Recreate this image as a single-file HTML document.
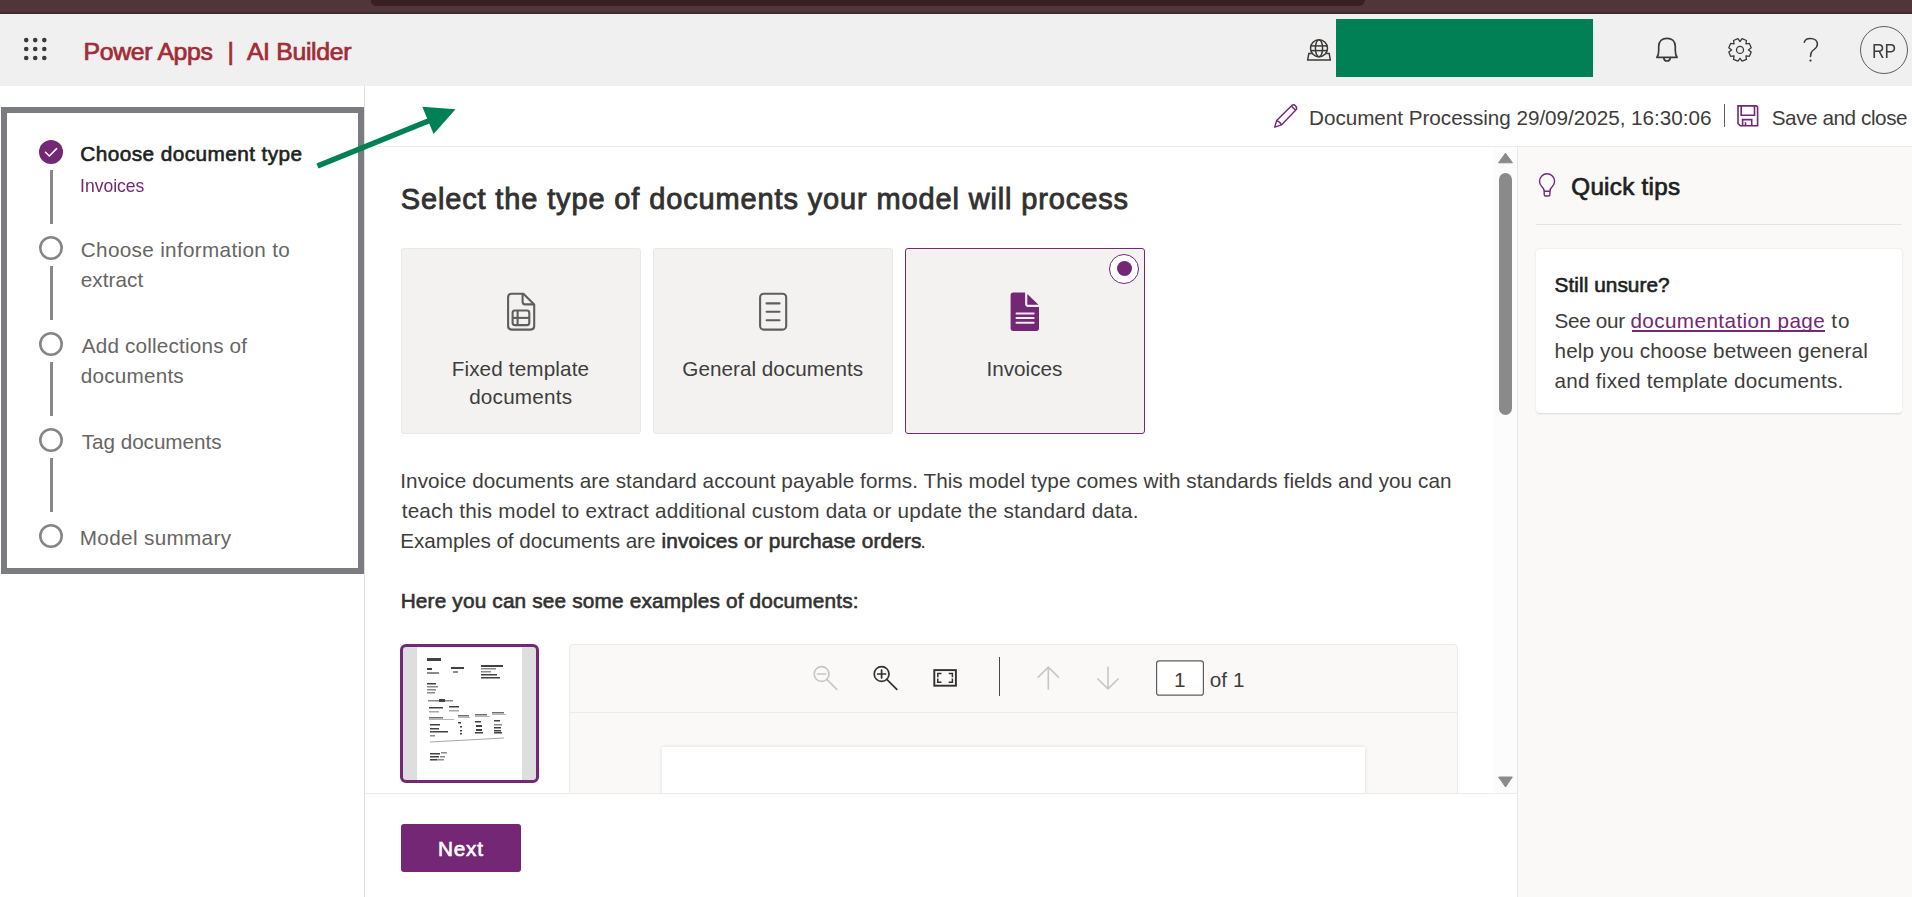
<!DOCTYPE html>
<html><head><meta charset="utf-8">
<style>
*{box-sizing:border-box;margin:0;padding:0}
html,body{width:1912px;height:897px;overflow:hidden;background:#fff;font-family:"Liberation Sans",sans-serif;color:#323130}
.a{position:absolute}
.t{position:absolute;white-space:nowrap;line-height:1}
.t a{color:#742774;text-decoration:underline;text-underline-offset:3px;text-decoration-thickness:1.5px}
svg{position:absolute;overflow:visible}
</style></head><body>
<!-- top browser bar -->
<div class="a" style="left:0;top:0;width:1912px;height:13px;background:#523539"></div>
<div class="a" style="left:0;top:12px;width:1912px;height:2px;background:#3c2c2f"></div>
<div class="a" style="left:371px;top:0;width:994px;height:6px;background:#381f23;border-radius:0 0 8px 7px"></div>
<!-- header -->
<div class="a" style="left:0;top:14px;width:1912px;height:72px;background:#f0f0f0"></div>
<svg style="left:0;top:0" width="60" height="70">
 <g fill="#3b3a39">
  <circle cx="26.2" cy="40.1" r="2.3"/><circle cx="35.2" cy="40.1" r="2.3"/><circle cx="44.3" cy="40.1" r="2.3"/>
  <circle cx="26.2" cy="49" r="2.3"/><circle cx="35.2" cy="49" r="2.3"/><circle cx="44.3" cy="49" r="2.3"/>
  <circle cx="26.2" cy="58" r="2.3"/><circle cx="35.2" cy="58" r="2.3"/><circle cx="44.3" cy="58" r="2.3"/>
 </g>
</svg>
<!-- globe -->
<svg style="left:1300px;top:30px" width="40" height="40" viewBox="1300 30 40 40">
 <g fill="none" stroke="#3b3a39" stroke-width="1.5">
  <circle cx="1319" cy="48.3" r="8.5"/>
  <ellipse cx="1319" cy="48.3" rx="3.6" ry="8.5"/>
  <line x1="1310.6" y1="45.9" x2="1327.4" y2="45.9"/>
  <line x1="1310.6" y1="50.6" x2="1327.4" y2="50.6"/>
  <path d="M1311.8 53.4 H1308.8 L1307.7 59.9 H1330.3 L1329.2 53.4 H1326.2"/>
 </g>
</svg>
<div class="a" style="left:1336px;top:19px;width:257px;height:58px;background:#018055"></div>
<!-- bell -->
<svg style="left:1650px;top:30px" width="40" height="40" viewBox="1650 30 40 40">
 <g fill="none" stroke="#3b3a39" stroke-width="1.7" stroke-linejoin="round">
  <path d="M1656.9 57.4 C1658.6 55.3 1658.7 53.6 1658.7 50.5 V46.6 C1658.7 41.3 1662.3 38.3 1667 38.3 C1671.7 38.3 1675.3 41.3 1675.3 46.6 V50.5 C1675.3 53.6 1675.4 55.3 1677.1 57.4 Z"/>
  <path d="M1663.8 57.7 C1663.8 59.9 1665.2 61 1667 61 C1668.8 61 1670.2 59.9 1670.2 57.7"/>
 </g>
</svg>
<!-- gear -->
<svg style="left:1720px;top:30px" width="40" height="40" viewBox="1720 30 40 40">
 <g fill="none" stroke="#3b3a39" stroke-width="1.3" stroke-linejoin="round">
  <path d="M1742.07 38.69 L1746.46 40.51 L1745.94 43.96 L1749.39 43.44 L1751.21 47.83 L1748.40 49.90 L1751.21 51.97 L1749.39 56.36 L1745.94 55.84 L1746.46 59.29 L1742.07 61.11 L1740.00 58.30 L1737.93 61.11 L1733.54 59.29 L1734.06 55.84 L1730.61 56.36 L1728.79 51.97 L1731.60 49.90 L1728.79 47.83 L1730.61 43.44 L1734.06 43.96 L1733.54 40.51 L1737.93 38.69 L1740.00 41.50 Z"/>
  <circle cx="1740" cy="49.9" r="3.5"/>
 </g>
</svg>
<!-- question -->
<svg style="left:1795px;top:30px" width="30" height="40" viewBox="1795 30 30 40">
 <g fill="none" stroke="#3b3a39" stroke-width="1.5" stroke-linecap="round">
  <path d="M1804.3 42.2 C1805 39.5 1807.3 38.4 1810.3 38.4 C1814.8 38.4 1817.4 41.1 1817.4 44.2 C1817.4 47.6 1814.5 49 1812.5 50.8 C1811 52.2 1810.5 53.5 1810.5 56.5"/>
 </g>
 <circle cx="1810.5" cy="60.6" r="1.1" fill="#3b3a39"/>
</svg>
<div class="a" style="left:1860px;top:26px;width:48px;height:48px;border:1px solid #605e5c;border-radius:50%"></div>

<!-- left panel -->
<div class="a" style="left:364px;top:86px;width:1px;height:811px;background:#e1dfdd"></div>
<svg style="left:0;top:0" width="364" height="600" viewBox="0 0 364 600">
 <circle cx="51" cy="152" r="12" fill="#742774"/>
 <path d="M45.5 152.3 L49.3 156 L56.6 148.6" fill="none" stroke="#fff" stroke-width="1.6" stroke-linecap="round" stroke-linejoin="round"/>
 <g stroke="#8a8886" stroke-width="3" fill="none">
  <line x1="51.5" y1="170" x2="51.5" y2="224"/>
  <line x1="51.5" y1="266" x2="51.5" y2="320"/>
  <line x1="51.5" y1="362" x2="51.5" y2="416"/>
  <line x1="51.5" y1="458" x2="51.5" y2="512"/>
 </g>
 <g stroke="#858585" stroke-width="2.6" fill="none">
  <circle cx="51" cy="248" r="10.7"/>
  <circle cx="51" cy="344" r="10.7"/>
  <circle cx="51" cy="440" r="10.7"/>
  <circle cx="51" cy="536" r="10.7"/>
 </g>
</svg>

<!-- toolbar -->
<div class="a" style="left:365px;top:146px;width:1547px;height:1px;background:#edebe9"></div>
<svg style="left:1270px;top:100px" width="34" height="32" viewBox="1270 100 34 32">
 <g fill="none" stroke="#742774" stroke-width="1.4" stroke-linejoin="round">
  <path d="M1276.6 120.6 L1291.3 105.9 A3.04 3.04 0 0 1 1295.6 110.2 L1281.4 124.9 L1274.7 127.2 Z"/>
  <line x1="1291.3" y1="105.9" x2="1295.6" y2="110.2"/>
  <path d="M1276.6 120.6 Q1280.2 121.6 1281.4 124.9"/>
 </g>
</svg>
<div class="a" style="left:1724px;top:104px;width:1px;height:23px;background:#605e5c"></div>
<svg style="left:1734px;top:102px" width="28" height="28" viewBox="1734 102 28 28">
 <g fill="none" stroke="#742774" stroke-width="1.6">
  <path d="M1738 105.9 H1755.8 Q1757.6 105.9 1757.6 107.7 V125.7 H1740.3 L1738 123.4 Z"/>
  <path d="M1741.2 105.9 V115.2 H1754.5 V105.9"/>
  <path d="M1742.6 125.7 V119.6 H1751.7 V125.7"/>
  <path d="M1745.5 122.2 V125.7"/>
 </g>
</svg>

<!-- cards -->
<div class="a" style="left:401px;top:248px;width:240px;height:186px;background:#f3f2f1;border:1px solid #ebe9e7;border-radius:3px"></div>
<div class="a" style="left:653px;top:248px;width:240px;height:186px;background:#f3f2f1;border:1px solid #ebe9e7;border-radius:3px"></div>
<div class="a" style="left:905px;top:248px;width:240px;height:186px;background:#f3f2f1;border:1px solid #742774;border-radius:3px"></div>
<svg style="left:500px;top:285px" width="45" height="55" viewBox="500 285 45 55">
 <g fill="none" stroke="#605e5c" stroke-width="2.1" stroke-linejoin="round">
  <path d="M523.4 293.8 H511.6 C509.6 293.8 508.1 295.3 508.1 297.3 V326.1 C508.1 328.1 509.6 329.6 511.6 329.6 H530.7 C532.7 329.6 534.2 328.1 534.2 326.1 V304.6 Z"/>
  <path d="M522.6 294 V301.8 C522.6 303.3 523.6 304.4 525.1 304.4 H534"/>
  <rect x="512.6" y="310.5" width="16.7" height="14.6" rx="2.4"/>
  <line x1="517.6" y1="310.5" x2="517.6" y2="325.1"/>
  <line x1="512.6" y1="317.9" x2="529.3" y2="317.9"/>
 </g>
</svg>
<svg style="left:752px;top:285px" width="45" height="55" viewBox="752 285 45 55">
 <g fill="none" stroke="#605e5c" stroke-width="2.1" stroke-linecap="round" stroke-linejoin="round">
  <rect x="760.1" y="293.8" width="26.1" height="35.8" rx="3.6"/>
  <line x1="766.6" y1="303.4" x2="779.5" y2="303.4"/>
  <line x1="766.6" y1="311.8" x2="779.5" y2="311.8"/>
  <line x1="766.6" y1="320.3" x2="779.5" y2="320.3"/>
 </g>
</svg>
<svg style="left:1005px;top:285px" width="45" height="55" viewBox="1005 285 45 55">
 <path d="M1025.1 292.6 H1013.1 C1011.7 292.6 1010.6 293.7 1010.6 295.1 V328.4 C1010.6 329.8 1011.7 330.9 1013.1 330.9 H1036.5 C1037.9 330.9 1039 329.8 1039 328.4 V306.9 H1028.1 C1026.4 306.9 1025.1 305.6 1025.1 303.9 Z" fill="#742774"/>
 <path d="M1027.3 294 L1038.5 304.7 H1027.3 Z" fill="#742774"/>
 <g stroke="#f3f2f1" stroke-width="2" stroke-linecap="round">
  <line x1="1016.5" y1="313.4" x2="1033.7" y2="313.4"/>
  <line x1="1016.5" y1="318" x2="1033.7" y2="318"/>
  <line x1="1016.5" y1="322.7" x2="1033.7" y2="322.7"/>
 </g>
</svg>
<div class="a" style="left:1109px;top:254px;width:30px;height:30px;background:#fff;border:1px solid #742774;border-radius:50%"></div>
<div class="a" style="left:1116.8px;top:260.9px;width:15px;height:15px;background:#742774;border-radius:50%"></div>

<!-- thumbnail -->
<div class="a" style="left:400px;top:644px;width:139px;height:139px;border:3px solid #742774;border-radius:6px;background:#dedede;overflow:hidden">
 <div class="a" style="left:14px;top:0;width:105px;height:133px;background:#fff"></div>
 <svg style="left:14px;top:0;filter:blur(0.45px);opacity:0.85" width="105" height="133" viewBox="0 0 105 133">
  <g fill="#222">
   <rect x="10" y="11" width="14" height="3"/>
   <rect x="10" y="21" width="5" height="2"/><rect x="10" y="25" width="12" height="2" fill="#777"/>
   <rect x="34" y="20" width="13" height="2"/><rect x="36" y="24" width="5" height="2" fill="#777"/>
   <rect x="64" y="18" width="22" height="2"/><rect x="64" y="21" width="15" height="1.5" fill="#777"/><rect x="64" y="24" width="10" height="1.5" fill="#777"/><rect x="64" y="27" width="16" height="1.5"/><rect x="64" y="30" width="19" height="1.5"/>
   <rect x="10" y="36" width="9" height="1.5"/><rect x="10" y="39" width="11" height="1.5" fill="#777"/><rect x="10" y="42" width="9" height="1.5" fill="#777"/><rect x="10" y="45" width="8" height="1.5" fill="#777"/>
   <rect x="11" y="53" width="14" height="1.5" fill="#777"/><rect x="22" y="52" width="6" height="3"/><rect x="28" y="53" width="8" height="1.5" fill="#777"/>
   <rect x="12" y="60" width="14" height="1.5"/><rect x="32" y="59" width="10" height="1.5"/>
   <rect x="12" y="64" width="10" height="1.5" fill="#999"/><rect x="32" y="63" width="10" height="1.5" fill="#999"/>
   <rect x="12" y="70" width="14" height="1.5" fill="#555"/><rect x="41" y="68" width="11" height="1.5" fill="#555"/><rect x="58" y="67" width="12" height="1.5" fill="#555"/><rect x="75" y="65" width="12" height="1.5" fill="#555"/>
   <rect x="12" y="72" width="25" height="1" fill="#aaa"/><rect x="41" y="70" width="12" height="1" fill="#aaa"/><rect x="58" y="69" width="15" height="1" fill="#aaa"/><rect x="75" y="67" width="14" height="1" fill="#aaa"/>
   <rect x="77" y="73" width="6" height="1.5"/>
   <rect x="13" y="77" width="10" height="1.5"/><rect x="41" y="75" width="3" height="1.5"/><rect x="58" y="74" width="6" height="1.5"/><rect x="77" y="77" width="8" height="1.5" fill="#777"/>
   <rect x="13" y="81" width="9" height="1.5"/><rect x="43" y="79" width="2" height="1.5"/><rect x="59" y="78" width="6" height="2"/><rect x="77" y="80" width="7" height="1.5"/>
   <rect x="13" y="84" width="18" height="1.5"/><rect x="43" y="83" width="2" height="1.5"/><rect x="59" y="82" width="6" height="2"/><rect x="77" y="83" width="7" height="1.5"/>
   <rect x="13" y="88" width="5" height="1.5" fill="#777"/><rect x="43" y="86" width="2" height="1.5"/><rect x="58" y="85" width="8" height="1.5"/><rect x="77" y="85" width="8" height="1.5"/>
   <path d="M13 95 L87 91" stroke="#999" stroke-width="1.2"/>
   <rect x="13" y="106" width="10" height="1.5"/><rect x="24" y="105" width="6" height="1.5" fill="#777"/>
   <rect x="13" y="109" width="9" height="1.5"/><rect x="23" y="109" width="5" height="1.5" fill="#777"/>
   <rect x="13" y="112" width="7" height="1.5"/><rect x="20" y="112" width="7" height="1.5" fill="#777"/>
  </g>
 </svg>
</div>

<!-- viewer -->
<div class="a" style="left:569px;top:644px;width:889px;height:200px;background:#faf9f8;border:1px solid #edebe9;border-radius:4px"></div>
<div class="a" style="left:570px;top:712px;width:887px;height:1px;background:#edebe9"></div>
<div class="a" style="left:662px;top:747px;width:703px;height:60px;background:#fff;box-shadow:0 0 4px rgba(0,0,0,0.12)"></div>
<svg style="left:800px;top:650px" width="470" height="55" viewBox="800 650 470 55">
 <g fill="none" stroke="#c8c6c4" stroke-width="1.7" stroke-linecap="round">
  <circle cx="821.6" cy="674" r="7.4"/>
  <line x1="817.6" y1="674" x2="825.6" y2="674"/>
  <line x1="826.8" y1="679.3" x2="836.8" y2="689.3"/>
 </g>
 <g fill="none" stroke="#323130" stroke-width="1.7" stroke-linecap="round">
  <circle cx="881.6" cy="674" r="7.4"/>
  <line x1="877.6" y1="674" x2="885.6" y2="674"/>
  <line x1="881.6" y1="670" x2="881.6" y2="678"/>
  <line x1="886.8" y1="679.3" x2="896.8" y2="689.3"/>
 </g>
 <g fill="none" stroke="#323130" stroke-width="1.9">
  <rect x="934.3" y="670.1" width="21.6" height="15.6"/>
  <path d="M937.8 677.3 V673.6 H941.5 M952.4 677.3 V673.6 H948.7 M937.8 678.6 V682.3 H941.5 M952.4 678.6 V682.3 H948.7" stroke-width="1.5"/>
 </g>
 <line x1="999.5" y1="657" x2="999.5" y2="696" stroke="#4a4948" stroke-width="1"/>
 <g fill="none" stroke="#c8c6c4" stroke-width="1.6">
  <path d="M1048.3 667.5 V689.6 M1037.7 677.6 L1048.3 667.2 L1058.9 677.6"/>
  <path d="M1108 666.4 V688.5 M1097.4 678.5 L1108 688.9 L1118.6 678.5"/>
 </g>
 <rect x="1156.6" y="660.9" width="46.8" height="34.3" rx="2.5" fill="#fff" stroke="#605e5c" stroke-width="1.2"/>
</svg>

<!-- scrollbar -->
<div class="a" style="left:1494px;top:147px;width:23px;height:646px;background:#fcfcfc"></div>
<div class="a" style="left:1499px;top:173px;width:13px;height:242px;background:#8a8a8a;border-radius:6.5px"></div>
<svg style="left:1490px;top:145px" width="30" height="650" viewBox="1490 145 30 650">
 <path d="M1505.5 153.2 L1512.5 162.8 H1498.5 Z" fill="#8a8a8a" stroke="#8a8a8a" stroke-width="1" stroke-linejoin="round"/>
 <path d="M1505.5 787 L1512.3 777 H1498.7 Z" fill="#8a8a8a" stroke="#8a8a8a" stroke-width="1" stroke-linejoin="round"/>
</svg>

<!-- right panel -->
<div class="a" style="left:1517px;top:147px;width:1px;height:750px;background:#e8e6e4"></div>
<div class="a" style="left:1518px;top:147px;width:394px;height:750px;background:#faf9f8"></div>
<svg style="left:1530px;top:165px" width="35" height="40" viewBox="1530 165 35 40">
 <g fill="none" stroke="#742774" stroke-width="1.4" stroke-linejoin="round">
  <path d="M1544.2 191.2 C1544.2 189.2 1543.2 187.9 1541.75 186.5 A7.5 7.5 0 1 1 1552.35 186.5 C1550.9 187.9 1549.9 189.2 1549.9 191.2 Z"/>
  <path d="M1544.2 191.2 V194.5 C1544.2 195.4 1544.8 196 1545.7 196 H1548.4 C1549.3 196 1549.9 195.4 1549.9 194.5 V191.2"/>
 </g>
</svg>
<div class="a" style="left:1536px;top:224px;width:366px;height:1px;background:#e6e4e2"></div>
<div class="a" style="left:1536px;top:249px;width:366px;height:164px;background:#fff;border-radius:4px;box-shadow:0 0.5px 2px rgba(0,0,0,0.13)"></div>
<div class="a" style="left:1631.5px;top:330px;width:193px;height:2px;background:#742774"></div>

<!-- footer -->
<div class="a" style="left:365px;top:793px;width:1152px;height:104px;background:#fff;border-top:1px solid #edebe9"></div>
<div class="a" style="left:401px;top:824px;width:120px;height:48px;background:#742774;border-radius:3px"></div>

<div class="t" style="left:83.60px;top:40px;font-size:24.8px;color:#a22c35;-webkit-text-stroke:0.74px #a22c35;letter-spacing:-0.333px;">Power Apps</div>
<div class="t" style="left:227.60px;top:40px;font-size:24.8px;color:#a22c35;-webkit-text-stroke:0.74px #a22c35;">|</div>
<div class="t" style="left:246.90px;top:40px;font-size:24.8px;color:#a22c35;-webkit-text-stroke:0.74px #a22c35;letter-spacing:-0.322px;">AI Builder</div>
<div class="t" style="left:1872.17px;top:42px;font-size:19.6px;color:#3e3d3c;transform:scaleX(0.8875);transform-origin:0 0;">RP</div>
<div class="t" style="left:1309.00px;top:108px;font-size:20.7px;color:#3e3d3c;letter-spacing:-0.033px;">Document Processing 29/09/2025, 16:30:06</div>
<div class="t" style="left:1771.70px;top:108px;font-size:20.7px;color:#3e3d3c;letter-spacing:-0.431px;">Save and close</div>
<div class="t" style="left:80.30px;top:144px;font-size:20.8px;color:#201f1e;-webkit-text-stroke:0.62px #201f1e;letter-spacing:0.421px;">Choose document type</div>
<div class="t" style="left:80.45px;top:176px;font-size:19px;color:#742774;transform:scaleX(0.9239);transform-origin:0 0;">Invoices</div>
<div class="t" style="left:80.80px;top:240px;font-size:20.7px;color:#676563;letter-spacing:0.330px;">Choose information to</div>
<div class="t" style="left:80.80px;top:270px;font-size:20.7px;color:#676563;letter-spacing:0.067px;">extract</div>
<div class="t" style="left:81.80px;top:336px;font-size:20.7px;color:#676563;letter-spacing:0.182px;">Add collections of</div>
<div class="t" style="left:80.80px;top:366px;font-size:20.7px;color:#676563;letter-spacing:0.213px;">documents</div>
<div class="t" style="left:81.80px;top:432px;font-size:20.7px;color:#676563;letter-spacing:-0.050px;">Tag documents</div>
<div class="t" style="left:79.80px;top:528px;font-size:20.7px;color:#676563;letter-spacing:0.342px;">Model summary</div>
<div class="t" style="left:400.70px;top:185px;font-size:29px;color:#323130;-webkit-text-stroke:0.87px #323130;letter-spacing:0.861px;">Select the type of documents your model will process</div>
<div class="t" style="left:451.65px;top:359px;font-size:20.7px;color:#3e3d3c;letter-spacing:0.131px;">Fixed template</div>
<div class="t" style="left:469.15px;top:387px;font-size:20.7px;color:#3e3d3c;letter-spacing:0.213px;">documents</div>
<div class="t" style="left:682.35px;top:359px;font-size:20.7px;color:#3e3d3c;letter-spacing:0.019px;">General documents</div>
<div class="t" style="left:986.55px;top:359px;font-size:20.7px;color:#3e3d3c;letter-spacing:-0.014px;">Invoices</div>
<div class="t" style="left:400.30px;top:471px;font-size:20.7px;color:#3e3d3c;letter-spacing:0.069px;">Invoice documents are standard account payable forms. This model type comes with standards fields and you can</div>
<div class="t" style="left:401.70px;top:501px;font-size:20.7px;color:#3e3d3c;letter-spacing:0.217px;">teach this model to extract additional custom data or update the standard data.</div>
<div class="t" style="left:400.30px;top:531px;font-size:20.7px;color:#3e3d3c;letter-spacing:-0.054px;">Examples of documents are</div>
<div class="t" style="left:661.50px;top:531px;font-size:20.8px;color:#323130;-webkit-text-stroke:0.62px #323130;letter-spacing:0.173px;">invoices or purchase orders</div>
<div class="t" style="left:920.30px;top:531px;font-size:20.7px;color:#3e3d3c;">.</div>
<div class="t" style="left:400.70px;top:591px;font-size:20.8px;color:#323130;-webkit-text-stroke:0.62px #323130;letter-spacing:0.163px;">Here you can see some examples of documents:</div>
<div class="t" style="left:1174.00px;top:670px;font-size:20.7px;color:#3e3d3c;">1</div>
<div class="t" style="left:1209.80px;top:670px;font-size:20.7px;color:#3e3d3c;letter-spacing:0.033px;">of 1</div>
<div class="t" style="left:438.00px;top:839px;font-size:20.8px;color:#ffffff;-webkit-text-stroke:0.62px #ffffff;letter-spacing:0.733px;">Next</div>
<div class="t" style="left:1571.30px;top:175px;font-size:24.2px;color:#201f1e;-webkit-text-stroke:0.73px #201f1e;letter-spacing:0.278px;">Quick tips</div>
<div class="t" style="left:1554.60px;top:275px;font-size:20.8px;color:#201f1e;-webkit-text-stroke:0.62px #201f1e;letter-spacing:0.050px;">Still unsure?</div>
<div class="t" style="left:1554.60px;top:311px;font-size:20.7px;color:#3e3d3c;letter-spacing:-0.333px;">See our</div>
<div class="t" style="left:1630.40px;top:311px;font-size:20.7px;color:#742774;letter-spacing:0.406px;">documentation page</div>
<div class="t" style="left:1831.20px;top:311px;font-size:20.7px;color:#3e3d3c;letter-spacing:1.100px;">to</div>
<div class="t" style="left:1554.60px;top:341px;font-size:20.7px;color:#3e3d3c;letter-spacing:0.127px;">help you choose between general</div>
<div class="t" style="left:1554.60px;top:371px;font-size:20.7px;color:#3e3d3c;letter-spacing:0.246px;">and fixed template documents.</div>

<!-- annotation box -->
<div class="a" style="left:1px;top:107px;width:363px;height:467px;border:6px solid #7b7c80"></div>
<!-- green arrow -->
<svg style="left:0;top:0" width="500" height="200" viewBox="0 0 500 200">
 <line x1="317.5" y1="166" x2="432" y2="119.5" stroke="#008055" stroke-width="5.6"/>
 <path d="M422.3 106.8 L455.5 109.2 L433.6 133.9 Z" fill="#008055"/>
</svg>
</body></html>
